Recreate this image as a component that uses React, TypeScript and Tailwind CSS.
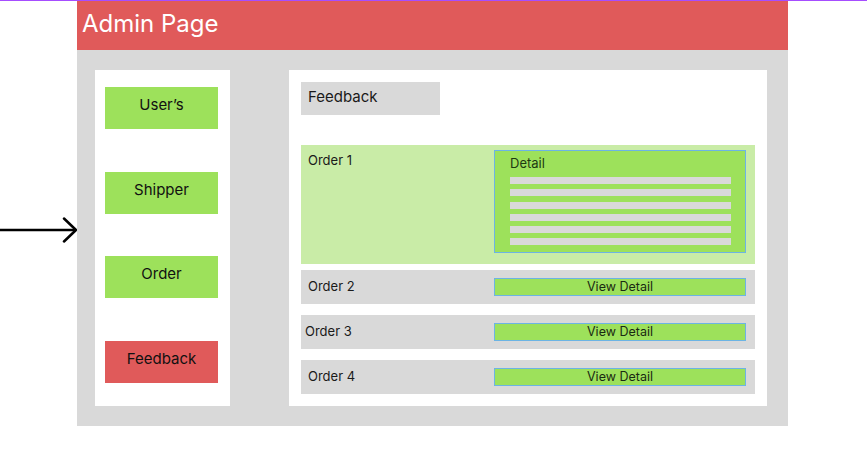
import React from 'react';

const navItems = [
  { label: "User’s", active: false },
  { label: 'Shipper', active: false },
  { label: 'Order', active: false },
  { label: 'Feedback', active: true },
];

const orders = ['Order 2', 'Order 3', 'Order 4'];

const Arrow: React.FC = () => (
  <svg width="77" height="30" viewBox="0 0 77 30" className="mt-[214px] shrink-0">
    <path d="M0,15 L76,15" stroke="#000" strokeWidth="2.5" fill="none" />
    <path d="M64,3.5 L76,15 L64,26.5" stroke="#000" strokeWidth="2.5" fill="none" strokeLinecap="round" strokeLinejoin="round" />
  </svg>
);

const App: React.FC = () => {
  return (
    <div className="w-[867px] h-[462px] bg-white font-['Inter',sans-serif] overflow-hidden">
      <div className="h-px bg-[#a64dff]" />
      <div className="flex items-start">
        <Arrow />
        <div className="w-[711px]">
          <div className="h-[49px] bg-[#e05a5a] pl-[5px] pt-[8px]">
            <h1 className="text-white text-[24px] leading-[29px]">Admin Page</h1>
          </div>

          <div className="h-[376px] bg-[#d9d9d9] flex pt-[20px] pl-[18px]">
            {/* sidebar */}
            <div className="w-[135px] h-[336px] bg-white pt-[17px] pl-[10px] flex flex-col gap-[42.7px]">
              {navItems.map((item) => (
                <div
                  key={item.label}
                  className={`w-[113px] h-[42px] flex justify-center pt-[9px] text-[15px] leading-[18px] text-[#111] ${item.active ? 'bg-[#e05a5a]' : 'bg-[#9de15b]'}`}
                >
                  {item.label}
                </div>
              ))}
            </div>

            {/* content */}
            <div className="ml-[59px] w-[478px] h-[336px] bg-white pt-[12px] pl-[12px]">
              <div className="w-[139px] h-[33px] bg-[#d9d9d9] pl-[7px] pt-[6px] text-[15px] leading-[18px] text-[#1a1a1a]">
                Feedback
              </div>

              <div className="mt-[30px] w-[454px] h-[119px] bg-[#c9eca7] flex">
                <div className="w-[193px] pl-[7px] pt-[7px] text-[13px] leading-[16px] text-[#1a1a1a]">Order 1</div>
                <div className="mt-[5px] w-[252px] h-[103px] bg-[#9de15b] border border-[#6cb4e4] pl-[15px] pt-[4px]">
                  <div className="text-[13px] leading-[16px] text-[#1e3a12]">Detail</div>
                  <div className="mt-[6px] flex flex-col gap-[5.3px]">
                    {[0, 1, 2, 3, 4, 5].map((i) => (
                      <div key={i} className="w-[221px] h-[7px] bg-[#d9d9d9]" />
                    ))}
                  </div>
                </div>
              </div>

              <div className="mt-[6px] flex flex-col gap-[11px]">
                {orders.map((o, i) => (
                  <div key={o} className="w-[454px] h-[34px] bg-[#d9d9d9] flex items-center">
                    <div className={`w-[193px] text-[13px] leading-[16px] text-[#1a1a1a] -mt-[2px] ${i === 1 ? 'pl-[4px]' : 'pl-[7px]'}`}>{o}</div>
                    <button className="w-[252px] h-[18px] bg-[#9de15b] border border-[#6cb4e4] text-[12.5px] leading-[16px] text-[#1a2a12] flex items-center justify-center">
                      View Detail
                    </button>
                  </div>
                ))}
              </div>
            </div>
          </div>
        </div>
      </div>
    </div>
  );
};

export default App;
